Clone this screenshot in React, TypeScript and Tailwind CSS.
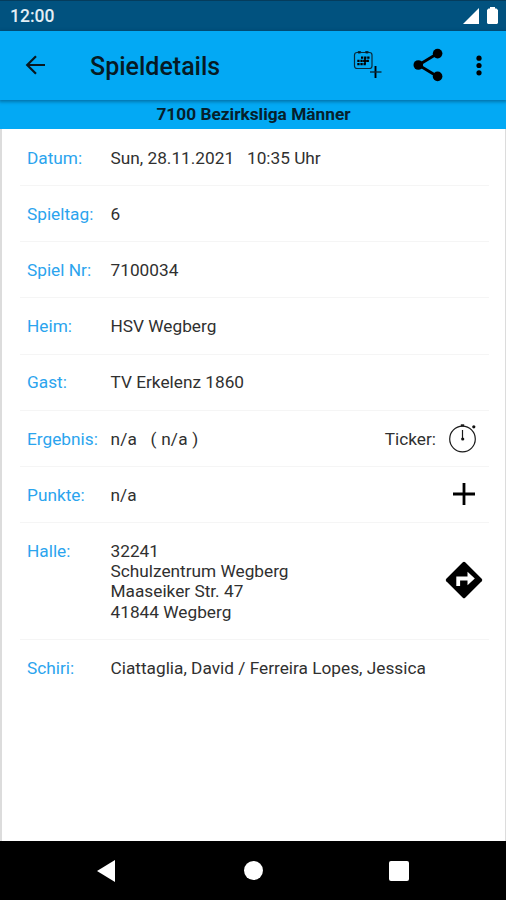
import type { ReactNode } from 'react';

interface DetailRowProps {
  label: string;
  children: ReactNode;
  action?: ReactNode;
}

function DetailRow({ label, children, action }: DetailRowProps) {
  return (
    <div className="mr-[16px] ml-[18px] flex border-b border-[#f5f5f5] pt-[17.8px] pr-[11px] pb-[17.2px] pl-[7px] last:border-b-0">
      <dt className="w-[83.5px] shrink-0 whitespace-nowrap text-[#2ba4ee]">{label}</dt>
      <dd className="flex-1 whitespace-pre text-[#303030]">{children}</dd>
      {action && <dd className="-my-3 flex items-center text-[#303030]">{action}</dd>}
    </div>
  );
}

function CalendarAddIcon() {
  return (
    <svg width="29" height="29" viewBox="0 0 29 29" fill="none" stroke="#0a2a3a">
      <rect x="1.5" y="2.5" width="17.5" height="16" rx="2.5" strokeWidth="1.2" />
      <path d="M5 1.6h2.6v1.4H5zM12.6 1.6h2.6v1.4h-2.6z" fill="#000" strokeWidth="1" />
      <path
        d="M8 7.6h8.6M4.3 10.9h12M4.3 14.2h9"
        stroke="#000"
        strokeWidth="2.3"
        strokeDasharray="2.3 0.8"
      />
      <path d="M10 11h5M12 8v6" stroke="#000" strokeWidth="1.6" />
      <path d="M22.5 16v12" stroke="#000" strokeWidth="1.9" />
      <path d="M17 22h11.5" strokeWidth="1.4" />
    </svg>
  );
}

function ShareIcon() {
  return (
    <svg width="30" height="34" viewBox="0 0 30 34">
      <path d="M24.5 5.5L5.5 17l19 11.5" fill="none" stroke="#000" strokeWidth="2.8" />
      <circle cx="24.6" cy="5.6" r="4.8" />
      <circle cx="5.3" cy="17" r="4.8" />
      <circle cx="24.6" cy="28.4" r="4.8" />
    </svg>
  );
}

function StopwatchIcon() {
  return (
    <svg width="30" height="30" viewBox="0 0 30 30" fill="none" stroke="#1a1a1a">
      <circle cx="14.5" cy="16" r="12.8" strokeWidth="1.2" />
      <path d="M14.5 7v9" strokeWidth="1.2" />
      <circle cx="14.7" cy="16" r="1.6" fill="#111" stroke="none" />
      <path d="M12.8 2.4h3.4" strokeWidth="2.2" />
      <circle cx="25.8" cy="3.8" r="1.6" fill="#111" stroke="none" />
    </svg>
  );
}

function DirectionsIcon() {
  return (
    <svg width="38" height="38" viewBox="0 0 38 38">
      <path d="M17.8 1.3a1.7 1.7 0 0 1 2.4 0l16.5 16.5a1.7 1.7 0 0 1 0 2.4L20.2 36.7a1.7 1.7 0 0 1-2.4 0L1.3 20.2a1.7 1.7 0 0 1 0-2.4z" />
      <path d="M13.2 25v-7.5h11" fill="none" stroke="#fff" strokeWidth="3.8" />
      <path d="M22.5 10.8l7.3 6.7-7.3 6.7z" fill="#fff" />
    </svg>
  );
}

export default function App() {
  return (
    <div className="flex h-[900px] w-[506px] flex-col overflow-hidden bg-black font-[Roboto,sans-serif]">
      <header className="flex h-[30.5px] shrink-0 items-center justify-between border-t border-[#053c5c] bg-[#01527f] pr-2 pl-[10px]">
        <span className="text-[17.5px] font-medium text-[#e3eef5]">12:00</span>
        <div className="flex items-center gap-2">
          <svg width="16" height="16" viewBox="0 0 16 16" fill="#fff">
            <path d="M16 0v16H0z" />
          </svg>
          <svg width="11" height="17" viewBox="0 0 11 17" fill="#fff">
            <path d="M3 0h5v1.5h1.5L11 3v13l-1 1H1l-1-1V3l1.5-1.5H3z" />
          </svg>
        </div>
      </header>

      <div className="z-10 flex h-[69px] shrink-0 items-center bg-[#03a9f4] pr-[24px] pl-[25px] shadow-[0_1px_3px_1px_rgba(0,40,70,0.4)]">
        <svg width="21" height="20" viewBox="0 0 21 20" fill="none" stroke="#081820" strokeWidth="2.2">
          <path d="M20 10H2.5M11 1.2L2.2 10l8.8 8.8" />
        </svg>
        <h1 className="mt-[3px] ml-[44px] text-[25px] font-medium text-[#061a24]">Spieldetails</h1>
        <div className="ml-auto flex items-center">
          <div className="pb-[2px]">
            <CalendarAddIcon />
          </div>
          <div className="ml-[31px]">
            <ShareIcon />
          </div>
          <svg className="ml-[33px]" width="6" height="21" viewBox="0 0 6 21">
            <circle cx="3" cy="3.2" r="2.6" />
            <circle cx="3" cy="10.5" r="2.6" />
            <circle cx="3" cy="17.8" r="2.6" />
          </svg>
        </div>
      </div>

      <h2 className="flex h-[29.5px] shrink-0 items-center justify-center bg-[#03a9f4] pt-[2px] pl-px text-[17.3px] font-bold text-[#06202c]">
        7100 Bezirksliga Männer
      </h2>

      <dl className="flex-1 border-r border-l-2 border-[#dcdcdc] bg-white pt-[0.8px] text-[17.25px] leading-[20.2px]">
        <DetailRow label="Datum:">{'Sun, 28.11.2021   10:35 Uhr'}</DetailRow>
        <DetailRow label="Spieltag:">6</DetailRow>
        <DetailRow label="Spiel Nr:">7100034</DetailRow>
        <DetailRow label="Heim:">HSV Wegberg</DetailRow>
        <DetailRow label="Gast:">TV Erkelenz 1860</DetailRow>
        <DetailRow
          label="Ergebnis:"
          action={
            <>
              <span className="mr-3">Ticker:</span>
              <div className="pb-[2px]">
                <StopwatchIcon />
              </div>
            </>
          }
        >
          <span className="tracking-[0.2px]">{'n/a   ( n/a )'}</span>
        </DetailRow>
        <DetailRow
          label="Punkte:"
          action={
            <svg className="mr-[3px] mb-px" width="22" height="22" viewBox="0 0 22 22" stroke="#000" strokeWidth="2.8">
              <path d="M11 0v22M0 11h22" />
            </svg>
          }
        >
          n/a
        </DetailRow>
        <DetailRow
          label="Halle:"
          action={
            <div className="-mr-[5px] pb-[2px]">
              <DirectionsIcon />
            </div>
          }
        >
          {'32241\nSchulzentrum Wegberg\nMaaseiker Str. 47\n41844 Wegberg'}
        </DetailRow>
        <DetailRow label="Schiri:">Ciattaglia, David / Ferreira Lopes, Jessica</DetailRow>
      </dl>

      <nav className="flex h-[59.5px] shrink-0 items-center justify-between bg-black pt-px pr-[97px] pl-[97px]">
        <svg width="18" height="22" viewBox="0 0 18 22" fill="#fff">
          <path d="M18 0v22L0 11z" />
        </svg>
        <div className="ml-[2px] size-[19px] rounded-full bg-white" />
        <div className="size-5 rounded-[2px] bg-white" />
      </nav>
    </div>
  );
}
